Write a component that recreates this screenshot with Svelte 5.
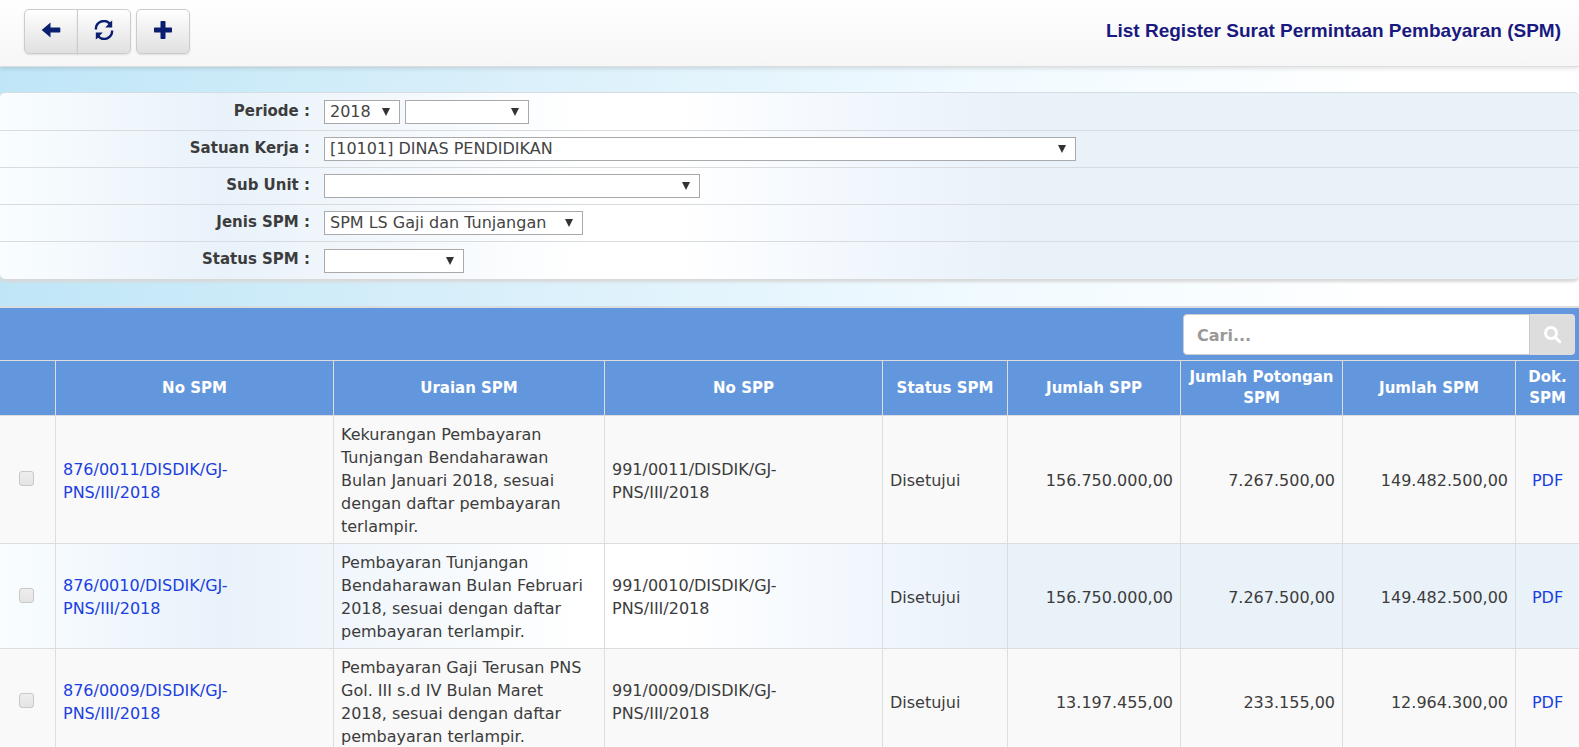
<script lang="ts">
  interface Option {
    value: string;
    label: string;
  }

  interface Spm {
    id: number;
    noSpm: string;
    uraian: string;
    noSpp: string;
    status: string;
    jumlahSpp: string;
    potongan: string;
    jumlahSpm: string;
  }

  let tahun = $state('2018');
  let bulan = $state('');
  let search = $state('');
  let selected = $state<number[]>([]);

  const filters: { id: string; label: string; size: string; options: Option[] }[] = [
    { id: 'satker', label: 'Satuan Kerja', size: 'wide', options: [{ value: '10101', label: '[10101] DINAS PENDIDIKAN' }] },
    { id: 'subunit', label: 'Sub Unit', size: 'medium', options: [{ value: '', label: '' }] },
    { id: 'jenis', label: 'Jenis SPM', size: 'jenis', options: [{ value: 'gaji', label: 'SPM LS Gaji dan Tunjangan' }] },
    { id: 'status', label: 'Status SPM', size: 'small', options: [{ value: '', label: '' }] }
  ];

  const rows: Spm[] = [
    {
      id: 11,
      noSpm: '876/0011/DISDIK/GJ-PNS/III/2018',
      uraian: 'Kekurangan Pembayaran Tunjangan Bendaharawan Bulan Januari 2018, sesuai dengan daftar pembayaran terlampir.',
      noSpp: '991/0011/DISDIK/GJ-PNS/III/2018',
      status: 'Disetujui',
      jumlahSpp: '156.750.000,00',
      potongan: '7.267.500,00',
      jumlahSpm: '149.482.500,00'
    },
    {
      id: 10,
      noSpm: '876/0010/DISDIK/GJ-PNS/III/2018',
      uraian: 'Pembayaran Tunjangan Bendaharawan Bulan Februari 2018, sesuai dengan daftar pembayaran terlampir.',
      noSpp: '991/0010/DISDIK/GJ-PNS/III/2018',
      status: 'Disetujui',
      jumlahSpp: '156.750.000,00',
      potongan: '7.267.500,00',
      jumlahSpm: '149.482.500,00'
    },
    {
      id: 9,
      noSpm: '876/0009/DISDIK/GJ-PNS/III/2018',
      uraian: 'Pembayaran Gaji Terusan PNS Gol. III s.d IV Bulan Maret 2018, sesuai dengan daftar pembayaran terlampir.',
      noSpp: '991/0009/DISDIK/GJ-PNS/III/2018',
      status: 'Disetujui',
      jumlahSpp: '13.197.455,00',
      potongan: '233.155,00',
      jumlahSpm: '12.964.300,00'
    }
  ];
</script>

<div class="page">
  <header class="topbar">
    <div class="toolbar">
      <div class="btn-group">
        <button type="button" class="btn" aria-label="Kembali">
          <svg width="20" height="20" viewBox="0 0 20 20"><path d="M9.5 2.5v5h9q.8 0 .8.8v3.400q0 .8-.8.8h-9v5L.7 10z" /></svg>
        </button>
        <button type="button" class="btn" aria-label="Muat ulang">
          <svg width="20" height="20" viewBox="0 0 20 20">
            <path d="M1.900 9.500A8 8 0 0 1 15.800 3.700M18.100 10.500A8 8 0 0 1 4.200 16.300" class="arc" />
            <path d="M18.200.5v7h-7l2.500-2.500 1.200-2zM1.800 19.500v-7h7l-2.500 2.500-1.200 2z" />
          </svg>
        </button>
      </div>
      <button type="button" class="btn single" aria-label="Tambah">
        <svg width="20" height="20" viewBox="0 0 20 20"><path d="M8.300 1h3.400q.8 0 .8.8v5.700h5.700q.8 0 .8.8v3.400q0 .8-.8.8h-5.700v5.700q0 .8-.8.8H8.300q-.8 0-.8-.8v-5.700H1.800q-.8 0-.8-.8V8.300q0-.8.8-.8h5.700V1.800q0-.8.8-.8z" /></svg>
      </button>
    </div>
    <h1>List Register Surat Permintaan Pembayaran (SPM)</h1>
  </header>

  <form class="filters">
    <div class="filter-row">
      <label for="tahun">Periode :</label>
      <select id="tahun" class="year" bind:value={tahun}>
        <option value="2018">2018</option>
      </select>
      <select class="month" aria-label="Bulan" bind:value={bulan}>
        <option value=""></option>
      </select>
    </div>
    {#each filters as f (f.id)}
      <div class="filter-row">
        <label for={f.id}>{f.label} :</label>
        <select id={f.id} class={f.size}>
          {#each f.options as o}
            <option value={o.value}>{o.label}</option>
          {/each}
        </select>
      </div>
    {/each}
  </form>

  <section class="list">
    <div class="search-bar">
      <div class="search">
        <input type="text" placeholder="Cari..." aria-label="Cari" bind:value={search} />
        <button type="button" aria-label="Cari">
          <svg width="18" height="18" viewBox="0 0 18 18">
            <circle cx="7" cy="7" r="5.500" />
            <path d="M11.200 11.200l4.500 4.500" />
          </svg>
        </button>
      </div>
    </div>

    <table>
      <colgroup>
        <col class="c-check" />
        <col class="c-no" />
        <col class="c-uraian" />
        <col class="c-no" />
        <col class="c-status" />
        <col class="c-jumlah" />
        <col class="c-potongan" />
        <col class="c-jumlah" />
        <col class="c-dok" />
      </colgroup>
      <thead>
        <tr>
          <th></th>
          <th>No SPM</th>
          <th>Uraian SPM</th>
          <th>No SPP</th>
          <th>Status SPM</th>
          <th>Jumlah SPP</th>
          <th>Jumlah Potongan SPM</th>
          <th>Jumlah SPM</th>
          <th>Dok. SPM</th>
        </tr>
      </thead>
      <tbody>
        {#each rows as row (row.id)}
          <tr>
            <td class="check">
              <input type="checkbox" value={row.id} bind:group={selected} aria-label="Pilih {row.noSpm}" />
            </td>
            <td class="text"><a href="#spm-{row.id}">{row.noSpm}</a></td>
            <td class="text">{row.uraian}</td>
            <td class="text">{row.noSpp}</td>
            <td>{row.status}</td>
            <td class="num">{row.jumlahSpp}</td>
            <td class="num">{row.potongan}</td>
            <td class="num">{row.jumlahSpm}</td>
            <td class="dok"><a href="#pdf-{row.id}">PDF</a></td>
          </tr>
        {/each}
      </tbody>
    </table>
  </section>
</div>

<style>
  :global(body) {
    margin: 0;
  }

  .page {
    --stripe: linear-gradient(to right, #f9fdff 0%, #e9f2fa 14%, #ffffff 37%, #ffffff 43%, #f0f6fd 56%, #e9f1f9 64%);
    height: 100vh;
    overflow: hidden;
    background: linear-gradient(to right, #bfe6f7 0%, #d8effa 30%, #f0faff 62%, #ffffff 88%);
    color: #3c3c3c;
    font-family: Verdana, 'DejaVu Sans', sans-serif;
    font-size: 16px;
    line-height: 23px;
  }

  .topbar {
    display: flex;
    align-items: flex-start;
    justify-content: space-between;
    box-sizing: border-box;
    height: 67px;
    padding: 9px 18px 0 24px;
    background: linear-gradient(#ffffff, #f6f6f6);
    border-bottom: 1px solid #ddd;
    box-shadow: 0 1px 5px rgba(0, 0, 0, 0.15);
  }

  .toolbar {
    display: flex;
    gap: 5px;
  }

  .btn-group {
    display: flex;
  }

  .btn {
    display: flex;
    align-items: center;
    justify-content: center;
    box-sizing: border-box;
    width: 54px;
    height: 45px;
    padding: 0 0 3px;
    background: linear-gradient(#ffffff, #e0e0e0);
    border: 1px solid #ccc;
    box-shadow: 0 1px 2px rgba(0, 0, 0, 0.1);
    cursor: pointer;
  }
  .btn:first-child {
    border-radius: 5px 0 0 5px;
  }
  .btn:last-child {
    border-radius: 0 5px 5px 0;
  }
  .btn + .btn {
    margin-left: -1px;
  }
  .btn.single {
    border-radius: 5px;
  }
  .btn svg {
    fill: #0a1f6f;
  }
  .btn .arc {
    fill: none;
    stroke: #0a1f6f;
    stroke-width: 2.4;
  }

  h1 {
    margin: 0;
    color: #191980;
    font-family: 'Liberation Sans', Arial, sans-serif;
    font-size: 19px;
    font-weight: 700;
    line-height: 43px;
  }

  .filters {
    margin: 25px 0 27px;
    padding-top: 1px;
    background: var(--stripe);
    border-top: 1px solid #d5dce2;
    border-radius: 5px;
    box-shadow: 0 3px 3px #d8d8d8;
  }

  .filter-row {
    display: flex;
    align-items: center;
    gap: 5px;
    box-sizing: border-box;
    height: 37px;
    border-bottom: 1px solid #d8dce0;
  }
  .filter-row:last-child {
    border-bottom: 0;
  }

  label {
    width: 310px;
    margin-right: 9px;
    padding-bottom: 2px;
    font-size: 15px;
    font-weight: 700;
    text-align: right;
  }

  select {
    appearance: none;
    box-sizing: border-box;
    height: 24px;
    padding: 0 24px 0 5px;
    background: #fff url("data:image/svg+xml,%3Csvg xmlns='http://www.w3.org/2000/svg' width='8' height='8'%3E%3Cpath d='M0 0h8L4 8z' fill='%23333'/%3E%3C/svg%3E") no-repeat right 9px center;
    border: 1px solid #a9a9a9;
    border-radius: 0;
    color: #444;
    font: inherit;
    line-height: 22px;
  }
  .year {
    width: 76px;
  }
  .month {
    width: 124px;
  }
  .wide {
    width: 752px;
  }
  .medium {
    width: 376px;
  }
  .jenis {
    width: 259px;
  }
  .small {
    width: 140px;
  }

  .list {
    border-top: 2px solid #ddd;
    background: #6397dd;
  }

  .search-bar {
    display: flex;
    justify-content: flex-end;
    padding: 6px 4px 5px;
  }

  .search {
    display: flex;
    width: 392px;
    height: 41px;
  }
  .search input {
    flex: 1;
    min-width: 0;
    box-sizing: border-box;
    padding: 2px 13px 0;
    border: 1px solid #ccc;
    border-radius: 4px 0 0 4px;
    font: inherit;
    font-weight: 700;
  }
  .search input::placeholder {
    color: #999;
  }
  .search button {
    display: flex;
    align-items: center;
    justify-content: center;
    width: 45px;
    padding: 0;
    background: #ddd;
    border: 0;
    border-radius: 0 4px 4px 0;
  }
  .search svg {
    fill: none;
    stroke: #fff;
    stroke-width: 3;
    stroke-linecap: round;
  }

  table {
    width: 100%;
    table-layout: fixed;
    border-collapse: separate;
    border-spacing: 0;
  }
  .c-check {
    width: 56px;
  }
  .c-uraian {
    width: 271px;
  }
  .c-no {
    width: 278px;
  }
  .c-status {
    width: 125px;
  }
  .c-jumlah {
    width: 173px;
  }
  .c-potongan {
    width: 162px;
  }

  th,
  td {
    border: solid #ddd;
    border-width: 0 1px 1px 0;
  }
  th:last-child,
  td:last-child {
    border-right: 0;
  }

  th {
    height: 42px;
    padding: 6px;
    border-top-width: 1px;
    color: #fff;
    font-size: 15px;
    line-height: 21px;
  }

  td {
    padding: 7px 7px 5px;
  }

  tbody tr {
    background: #f9f9f9;
  }
  tbody tr:nth-child(even) {
    background: var(--stripe);
  }

  a {
    color: #1a40e0;
    text-decoration: none;
  }

  .text {
    padding-right: 16px;
  }
  .num {
    text-align: right;
  }
  .check,
  .dok {
    text-align: center;
  }

  .check {
    padding: 5px 8px 7px 6px;
  }
  .check input {
    appearance: none;
    display: block;
    box-sizing: border-box;
    width: 15px;
    height: 15px;
    margin: 0 auto;
    background: linear-gradient(#eee, #e4e4e4);
    border: 1px solid #c8c8c8;
    border-radius: 3px;
  }
  .check input:checked {
    background: #6397dd;
  }
</style>
